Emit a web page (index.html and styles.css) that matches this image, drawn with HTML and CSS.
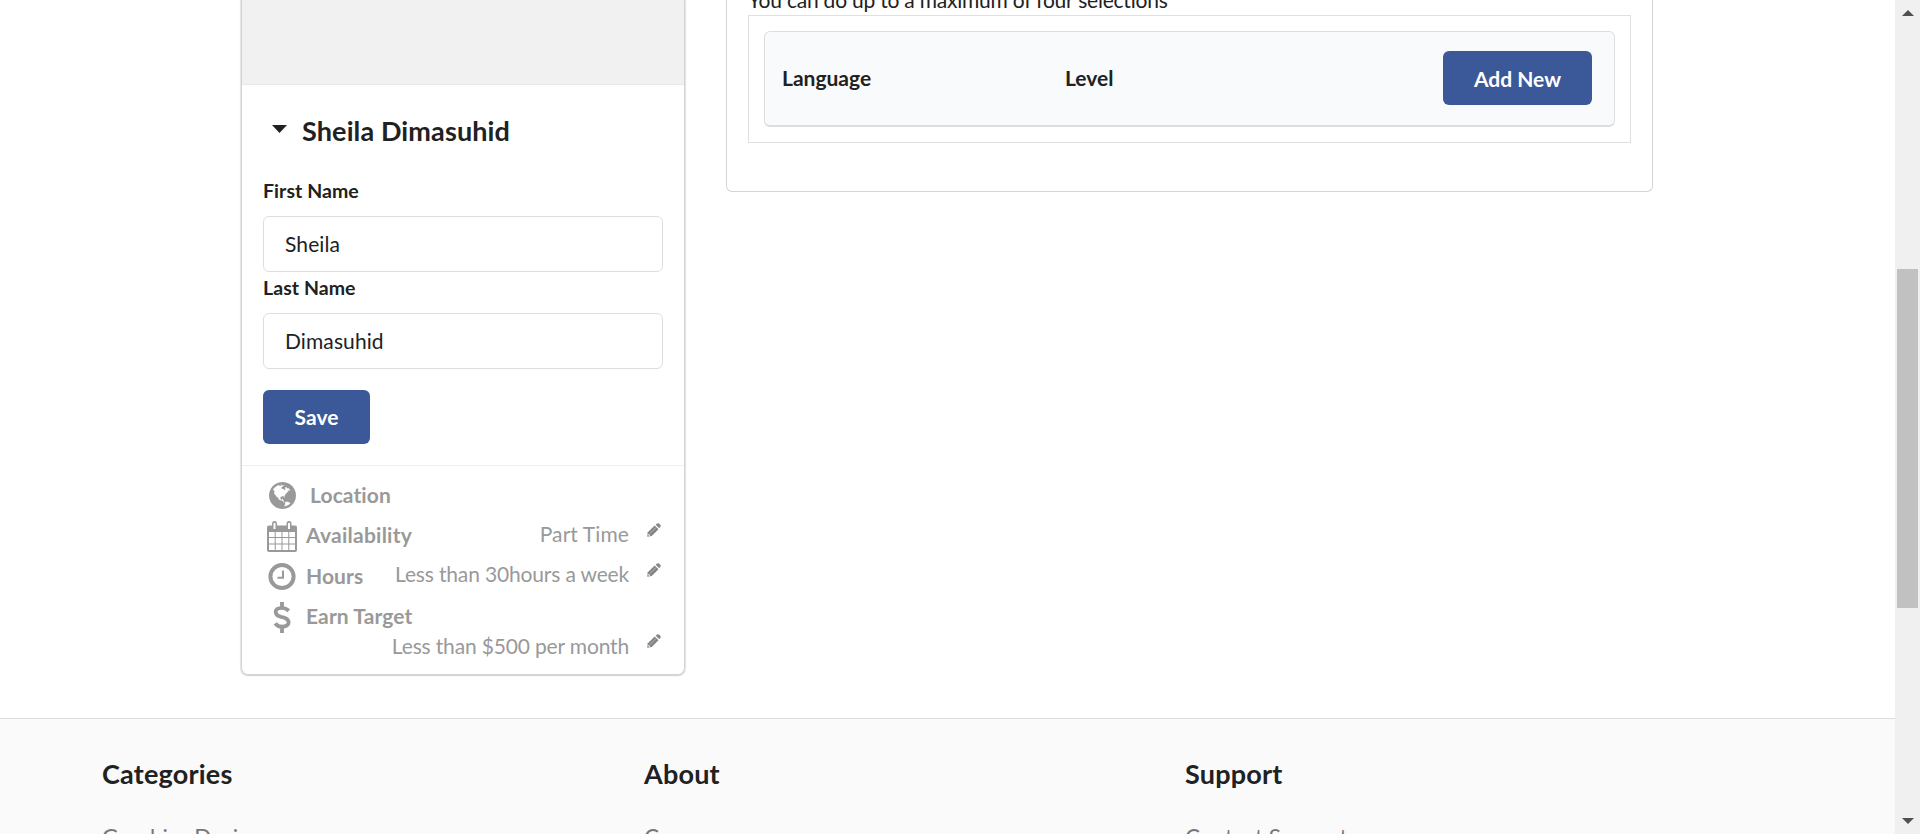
FILE: index.html
```html
<!DOCTYPE html>
<html lang="en">
<head>
<meta charset="utf-8">
<title>Profile</title>
<link rel="stylesheet" href="styles.css">
</head>
<body>
<svg width="0" height="0" class="defs">
  <symbol id="pencil" viewBox="0 0 14 14">
    <path d="M0.2 13.8 0.8 9.300 7.700 2.500 11.500 6.300 4.700 13Z"/>
    <path d="M8.700 1.700 10 .6Q11.200-.2 12.200.7L13.400 1.900Q14.200 2.800 13.300 3.900L12.300 5.300Z"/>
    <path d="M1.300 11.300 2.900 12.800" stroke="#fff" stroke-width="1.200" opacity=".8"/>
    <path d="M3 10.300 9 4.700" stroke="#fff" stroke-width="1" opacity=".35"/>
  </symbol>
</svg>
<div class="window">
  <div class="page">
    <main class="main">
      <aside class="card">
        <div class="photo"></div>
        <section class="details">
          <h2 class="name"><svg class="caret" viewBox="0 0 15 8"><path d="M0 0H15L7.5 8Z"/></svg>Sheila Dimasuhid</h2>
          <label class="label">First Name</label>
          <input class="input" type="text" value="Sheila">
          <label class="label">Last Name</label>
          <input class="input" type="text" value="Dimasuhid">
          <button class="button save">Save</button>
        </section>
        <section class="extra">
          <div class="row location">
            <svg class="icon globe" viewBox="0 128 1536 1536"><path d="M768 128q209 0 385.500 103t279.500 279.500 103 385.500-103 385.500-279.500 279.500-385.500 103-385.500-103-279.500-279.500-103-385.500 103-385.500 279.500-279.500 385.500-103zm274 521q-2 1-9.500 9.500t-13.500 9.500q2 0 4.500-5t5-11 3.500-7q6-7 22-15 14-6 52-12 34-8 51 11-2-2 9.500-13t14.500-12q3-2 15-4.500t15-7.500l2-22q-12 1-17.500-7t-6.500-21q0 2-6 8 0-7-4.500-8t-11.500 1-9 1q-10-3-15-7.500t-8-16.500-4-15q-2-5-9.500-11t-9.500-10q-1-2-2.500-5.500t-3-6.500-4-5.500-5.500-2.500-7 5-7.500 10-4.500 5q-3-2-6-1.500t-4.500 1-4.500 3-5 3.500q-3 2-8.500 3t-8.500 2q15-5-1-11-10-4-16-3 9-4 7.500-12t-8.500-14h5q-1-4-8.500-8.500t-17.500-8.500-13-6q-8-5-34-9.500t-33-.5q-5 6-4.500 10.500t4 14 3.500 12.500q1 6-5.500 13t-6.500 12q0 7 14 15.500t10 21.500q-3 8-16 16t-16 12q-5 8-1.500 18.500t10.500 16.500q2 2 1.500 4t-3.500 4.500-5.500 4-6.500 3.500l-3 2q-11 5-20.500-6t-13.500-26q-7-25-16-30-23-8-29 1-5-13-41-26-25-9-58-4 6-1 0-15-7-15-19-12 3-6 4-17.500t1-13.500q3-13 12-23 1-1 7-8.500t9.500-13.500.5-6q35 4 50-11 5-5 11.500-17t10.500-17q9-6 14-5.500t14.500 5.500 14.500 5q14 1 15.500-11t-7.500-20q12 1 3-17-4-7-8-9-12-4-27 5-8 4 2 8-1-1-9.500 10.500t-16.500 17.500-16-5q-1-1-5.500-13.500t-9.500-13.500q-8 0-16 15 3-8-11-15t-24-8q19-12-8-27-7-4-20.500-5t-19.500 4q-5 7-5.500 11.500t5 8 10.500 5.500 11.500 4 8.500 3q14 10 8 14-2 1-8.500 3.500t-11.500 4.500-6 4q-3 4 0 14t-2 14q-5-5-9-17.500t-7-16.500q7 9-25 6l-10-1q-4 0-16 2t-20.500 1-13.500-8q-4-8 0-20 1-4 4-2-4-3-11-9.500t-10-8.500q-46 15-94 41 6 1 12-1 5-2 13-6.500t10-5.500q34-14 42-7l5-5q14 16 20 25-7-4-30-1-20 6-22 12 7 12 5 18-4-3-11.500-10t-14.500-11-15-5q-16 0-22 1-146 80-235 222 7 7 12 8 4 1 5 9t2.500 11 11.500-3q9 8 3 19 1-1 44 27 19 17 21 21 3 11-10 18-1-2-9-9t-9-4q-3 5 .5 18.500t10.500 12.500q-7 0-9.500 16t-2.500 35.500-1 23.500l2 1q-3 12 5.500 34.500t21.500 19.500q-13 3 20 43 6 8 8 9 3 2 12 7.500t15 10 10 10.500q4 5 10 22.500t14 23.500q-2 6 9.500 20t10.500 23q-1 0-2.500 1t-2.500 1q3 7 15.500 14t15.500 13q1 3 2 10t3 11 8 2q2-20-24-62-15-25-17-29-3-5-5.500-15.500t-4.500-14.500q2 0 6 1.500t8.500 3.500 7.500 4 2 3q-3 7 2 17.500t12 18.500 17 19 12 13q6 6 14 19.500t0 13.500q9 0 20 10.500t17 19.500q5 8 8 26t5 24q2 7 8.500 13.500t12.500 9.500l16 8 13 7q5 2 18.500 10.500t21.500 11.500q10 4 16 4t14.500-2.500 13.500-3.500q15-2 29 15t21 21q36 19 55 11-2 1 .5 7.500t8 15.500 9 14.500 5.500 8.500q5 6 18 15t18 15q6-4 7-9-3 8 7 20t18 10q14-3 14-32-31 15-49-18 0-1-2.500-5.500t-4-8.500-2.500-8.500 0-7.500 5-3q9 0 10-3.500t-2-12.500-4-13q-1-8-11-20t-12-15q-5 9-16 8t-16-9q0 1-1.500 5.500t-1.500 6.500q-13 0-15-1 1-3 2.500-17.500t3.500-22.500q1-4 5.500-12t7.500-14.500 4-12.500-4.500-9.500-17.500-2.500q-19 1-26 20-1 3-3 10.500t-5 11.500-9 7q-7 3-24 2t-24-5q-13-8-22.500-29t-9.500-37q0-10 2.500-26.500t3-25-5.500-24.500q3-2 9-9.500t10-10.500q2-1 4.500-1.500t4.500 0 4-1.500 3-6q-1-1-4-3-3-3-4-3 7 3 28.500-1.500t27.500 1.500q15 11 22-2 0-1-2.500-9.500t-.5-13.500q5 27 29 9 3 3 15.500 5t17.500 5q3 2 7 5.500t5.500 4.500 5-.5 8.500-6.500q10 14 12 24 11 40 19 44 7 3 11 2t4.500-9.500 0-14-1.500-12.500l-1-8v-18l-1-8q-15-3-18.500-12t1.500-18.500 15-18.500q1-1 8-3.500t15.500-6.500 12.500-8q21-19 15-35 7 0 11-9-1 0-5-3t-7.500-5-4.500-2q9-5 2-16 5-3 7.500-11t7.500-10q9 12 21 2 8-8 1-16 5-7 20.500-10.500t18.500-9.500q7 2 8-2t1-12 3-12q4-5 15-9t13-5l17-11q3-4 0-4 18 2 31-11 10-11-6-20 3-6-3-9.500t-15-5.500q3-1 11.500-.5t10.500-1.500q15-10-7-16-17-5-43 12zm-163 877q206-36 351-189-3-3-12.500-4.500t-12.500-3.500q-18-7-24-8 1-7-2.500-13t-8-9-12.500-8-11-7q-2-2-7-6t-7-5.500-7.500-4.500-8.500-2-10 1l-3 1q-3 1-5.500 2.500t-5.500 3-4 3 0 2.500q-21-17-36-22-5-1-11-5.500t-10.500-7-10-1.500-11.500 7q-5 5-6 15t-2 13q-7-5 0-17.500t2-18.500q-3-6-10.500-4.500t-12 4.500-11.500 8.500-9 6.500-8.500 5.500-8.500 7.500q-3 4-6 12t-5 11q-2-4-11.500-6.500t-9.500-5.500q2 10 4 35t5 38q7 31-12 48-27 25-29 40-4 22 12 26 0 7-8 20.500t-7 21.500q0 6 2 16z"/></svg>
            <b class="key">Location</b>
          </div>
          <div class="row">
            <svg class="icon" viewBox="0 0 30 31"><path fill-rule="evenodd" d="M2 4.5H5V3Q5 0 7.5 0T10 3V4.5H19.500V3Q19.500 0 22 0T24.500 3V4.500H28Q30 4.500 30 6.500V29Q30 31 28 31H2Q0 31 0 29V6.500Q0 4.500 2 4.500ZM2 11V16H7.700V11ZM8.700 11V16H14.500V11ZM15.500 11V16H21.300V11ZM22.300 11V16H28V11ZM2 17V22.500H7.700V17ZM8.700 17V22.500H14.500V17ZM15.500 17V22.500H21.300V17ZM22.300 17V22.500H28V17ZM2 23.500V29H7.700V23.500ZM8.700 23.500V29H14.500V23.500ZM15.500 23.500V29H21.300V23.500ZM22.300 23.500V29H28V23.500ZM6.500 2V8H8.500V2ZM21 2V8H23V2Z"/></svg>
            <b class="key wide">Availability</b>
            <span class="value short">Part Time</span><svg class="pencil"><use href="#pencil"/></svg>
          </div>
          <div class="row">
            <svg class="icon" viewBox="0 0 30 30"><circle cx="15" cy="15" r="11.600" class="line thick"/><path class="line" d="M16 9V16.300H10.500"/></svg>
            <b class="key">Hours</b>
            <span class="value">Less than 30hours a week</span><svg class="pencil"><use href="#pencil"/></svg>
          </div>
          <div class="row">
            <svg class="icon" viewBox="0 0 30 32"><path class="line dollar" d="M22 9Q18.500 6 14.800 6C6 6 7 14 14 15.300C24.500 17 24 25.500 15 25.500Q10.500 25.500 8 22M15 0V6M15 25V32"/></svg>
            <b class="key">Earn Target</b>
          </div>
          <div class="row amount"><span class="value">Less than $500 per month</span><svg class="pencil"><use href="#pencil"/></svg></div>
        </section>
      </aside>
      <section class="panel">
        <p class="hint">You can do up to a maximum of four selections</p>
        <div class="frame">
          <div class="table"><b class="language">Language</b><b class="level">Level</b><button class="button">Add New</button></div>
        </div>
      </section>
    </main>
    <footer class="footer">
      <div class="column"><h3>Categories</h3><a>Graphics Design</a></div>
      <div class="column"><h3>About</h3><a>Careers</a></div>
      <div class="column"><h3>Support</h3><a>Contact Support</a></div>
    </footer>
  </div>
  <div class="scrollbar">
    <svg class="arrow" viewBox="0 0 12 6"><path d="M0 6 6 0 12 6Z"/></svg>
    <div class="thumb"></div>
    <svg class="arrow" viewBox="0 0 12 6"><path d="M0 0H12L6 6Z"/></svg>
  </div>
</div>
</body>
</html>
```
FILE: styles.css
```css
* { box-sizing: border-box; }
body { margin: 0; height: 834px; overflow: hidden; background: #fff; color: #212121; font: 21px/30px Lato, sans-serif; font-variant-ligatures: none; }
h2, h3, p { margin: 0; }
.defs { display: none; }
.window { display: flex; width: 1920px; height: 834px; }
.page { width: 1895px; height: 834px; overflow: hidden; }
.main { display: flex; align-items: flex-start; gap: 41px; height: 718px; padding-left: 241px; }
.card { width: 444px; height: 675px; border: solid #d4d4d5; border-width: 0 1px 1px; border-radius: 0 0 7px 7px; box-shadow: 0 1px 1px #d4d4d5, 0 0 1px 1px #e5e5e6; }
.photo { height: 85px; background: #f1f1f1; border-bottom: 1px solid #e8e8e8; }
.details { display: flex; flex-direction: column; align-items: flex-start; height: 381px; padding: 27px 21px 0; border-bottom: 1px solid #efefef; }
.name { display: flex; align-items: center; height: 38px; padding-left: 9px; font-size: 27px; line-height: 38px; letter-spacing: .12px; }
.caret { width: 15px; height: 8px; margin: 0 15px 4px 0; fill: #212121; }
.label { height: 30px; margin-top: 26px; font-size: 19.5px; font-weight: 700; line-height: 30px; letter-spacing: .06px; }
.input { width: 400px; height: 56px; margin-top: 10px; padding: 0 21px 2px; border: 1px solid #dededf; border-radius: 6px; color: #212121; font: 21px Lato, sans-serif; letter-spacing: .1px; outline: 0; }
.input + .label { margin-top: 1px; }
.button { height: 54px; padding: 1px 31px 0; border: 0; border-radius: 6px; background: #3b5998; color: #fff; font: 700 21px Lato, sans-serif; }
.save { width: 107px; margin-top: 21px; padding: 0 0 1px; }
.extra { padding: 8px 22px 0; color: #999; }
.row { display: flex; height: 40.4px; line-height: 40px; align-items: center; }
.icon { width: 30px; height: 31px; margin: 4px 9px 0 3px; fill: #999; }
.globe { width: 27px; height: 27px; margin: 2px 10px 0 5px; }
.line { fill: none; stroke: #999; stroke-width: 2; }
.thick { stroke-width: 4; }
.dollar { stroke-width: 4; }
.key { padding-top: 2px; letter-spacing: .1px; }
.wide { padding-top: 0; letter-spacing: .25px; }
.location .key { padding-left: 4px; }
.value { margin-left: auto; padding-bottom: 2px; letter-spacing: -.16px; }
.short { letter-spacing: .1px; }
.pencil { width: 14px; height: 14px; margin: 0 1px 9px 18px; fill: #858585; }
.amount { height: 30px; margin-top: -5px; }
.amount .value { padding-bottom: 0; }
.panel { width: 927px; height: 192px; padding: 0 21px; border: solid #d4d4d5; border-width: 0 1px 1px; border-radius: 0 0 6px 6px; }
.hint { height: 30px; margin-top: -15px; letter-spacing: -.22px; }
.frame { height: 128px; padding: 15px; border: 1px solid #dfdfdf; }
.table { display: flex; align-items: center; height: 96px; padding: 0 22px 2px 17px; border: 1px solid #dcdddf; border-bottom-width: 2px; border-radius: 6px; background: #f9fafb; }
.language { width: 283px; }
.level { flex: 1; }
.footer { display: grid; grid-template-columns: 542px 541px 1fr; height: 116px; padding: 36px 0 0 102px; border-top: 1px solid #dedede; background: #fafafa; }
.footer h3 { font-size: 27px; line-height: 38px; letter-spacing: .2px; }
.footer a { display: block; margin-top: 30px; color: #777; font-size: 22.5px; }
.scrollbar { display: flex; flex-direction: column; align-items: center; width: 25px; padding: 10px 0; background: #f0f0f0; }
.arrow { width: 12px; height: 6px; fill: #505050; }
.thumb { width: 21px; height: 339px; margin: 253px 0 auto; background: #c1c1c1; }
```
